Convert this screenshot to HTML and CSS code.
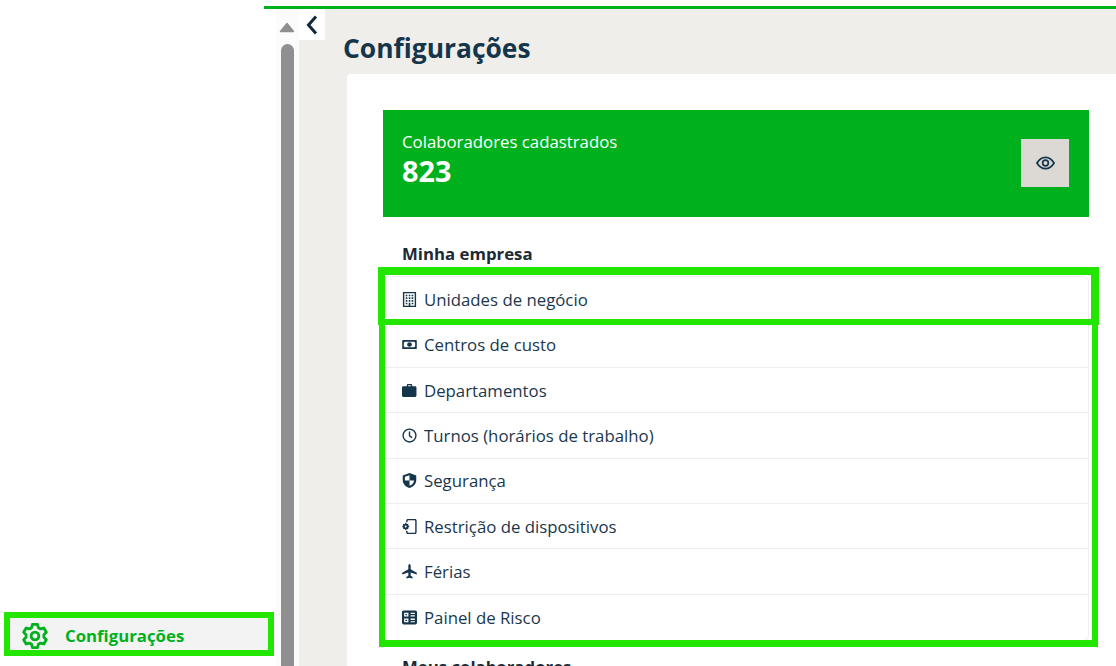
FILE: index.html
```html
<!DOCTYPE html>
<html lang="pt-BR">
<head>
<meta charset="utf-8">
<title>Configurações</title>
<link rel="stylesheet" href="styles.css">
</head>
<body>
<div class="shell">
  <aside class="sidebar">
    <a class="side-item">
      <svg class="gear" viewBox="0 0 24 24"><path d="M8.890 4.310 9.710 1.240H14.290L15.110 4.310 17.100 5.460 20.170 4.640 22.460 8.600 20.220 10.850V13.150L22.460 15.400 20.170 19.360 17.100 18.540 15.110 19.690 14.290 22.760H9.710L8.890 19.690 6.900 18.540 3.830 19.360 1.540 15.400 3.780 13.150V10.850L1.540 8.600 3.830 4.640 6.900 5.460Z"/><circle cx="12" cy="12" r="3.600"/></svg>
      <span>Configurações</span>
    </a>
  </aside>
  <div class="content">
    <div class="scroll">
      <svg class="scroll-up" viewBox="0 0 16 11"><path d="M8 1.500 14.500 9.500H1.500Z"/></svg>
      <div class="scroll-thumb"></div>
    </div>
    <main class="main">
      <button class="collapse" type="button" aria-label="Recolher">
        <svg viewBox="0 0 12 20"><path d="M10 1.500 2.500 10 10 18.500"/></svg>
      </button>
      <h1 class="title">Configurações</h1>
      <section class="card">
        <div class="banner">
          <div class="banner-text">
            <div class="banner-label">Colaboradores cadastrados</div>
            <div class="banner-value">823</div>
          </div>
          <button class="eye-btn" type="button" aria-label="Mostrar">
            <svg viewBox="0 0 20 14"><path d="M1 7C3.500 2.800 6.500 1 10 1s6.500 1.800 9 6c-2.500 4.200-5.500 6-9 6S3.500 11.200 1 7Z"/><circle cx="10" cy="7" r="3"/></svg>
          </button>
        </div>
        <h2 class="section">Minha empresa</h2>
        <div class="list-wrap">
          <ul class="list">
            <li class="row">
              <svg class="icon" viewBox="0 0 14 14"><path class="line" d="M1.500.500h11v13h-11z"/><path class="dots" d="M3.500 2.500h1.500v1.500H3.500zM6.300 2.500h1.500v1.500H6.300zM9 2.500h1.500v1.500H9zM3.500 5h1.500v1.500H3.500zM6.300 5h1.500v1.500H6.300zM9 5h1.500v1.500H9zM3.500 7.500h1.500v1.500H3.500zM6.300 7.500h1.500v1.500H6.300zM9 7.500h1.500v1.500H9zM3.500 10h1.500v1.500H3.500zM6.300 10h1.500v3H6.300zM9 10h1.500v1.500H9z"/></svg>
              <span>Unidades de negócio</span>
            </li>
            <li class="row">
              <svg class="icon" viewBox="0 0 14 14"><path class="fill" fill-rule="evenodd" d="M1 2.800h12a.8.800 0 0 1 .8.800v6.800a.8.800 0 0 1-.8.800H1a.8.800 0 0 1-.8-.8V3.600A.8.800 0 0 1 1 2.800Zm1.500 1.700-.8.800v3.400l.8.800h9l.8-.8V5.300l-.8-.8Z"/><circle class="fill" cx="7" cy="7" r="2.200"/></svg>
              <span>Centros de custo</span>
            </li>
            <li class="row">
              <svg class="icon" viewBox="0 0 14 14"><path class="fill" d="M4.500 3V1.800c0-.5.400-.8.800-.8h3.400c.4 0 .8.300.8.800V3h2.700c.7 0 1.300.6 1.300 1.300v7.400c0 .7-.6 1.300-1.300 1.300H1.300C.6 13 0 12.400 0 11.700V4.300C0 3.600.6 3 1.300 3Zm1.200 0h2.600V2.200H5.700Z"/></svg>
              <span>Departamentos</span>
            </li>
            <li class="row">
              <svg class="icon" viewBox="0 0 14 14"><circle class="line" cx="7" cy="7" r="6"/><path class="line" d="M7 3.300V7.300l2.500 1.700"/></svg>
              <span>Turnos (horários de trabalho)</span>
            </li>
            <li class="row">
              <svg class="icon" viewBox="0 0 14 14"><path class="fill" fill-rule="evenodd" d="M7 0 13.300 2.300V6.500C13.300 10.300 10.700 12.800 7 14 3.300 12.800.7 10.300.7 6.500V2.300ZM7 2 2.700 3.500V7H7V2ZM7 7v5c2.500-1 4-2.800 4.300-5Z"/></svg>
              <span>Segurança</span>
            </li>
            <li class="row">
              <svg class="icon" viewBox="0 0 14 14"><path class="line" d="M4.500 3V1.800c0-.7.500-1.300 1.200-1.300h6.100c.7 0 1.200.6 1.200 1.300v10.400c0 .7-.5 1.300-1.200 1.300H5.700c-.7 0-1.200-.6-1.200-1.300V11"/><circle class="line thick" cx="3.500" cy="7" r="1.700"/><path class="line" d="M3.500 3.800v1.200M3.500 9v1.200M.3 7H1.500M5.500 7h1.200M1.300 4.800l.8.800M4.900 8.400l.8.800M1.300 9.200l.8-.8M4.900 5.600l.8-.8"/></svg>
              <span>Restrição de dispositivos</span>
            </li>
            <li class="row">
              <svg class="icon" viewBox="0 0 14 14"><path class="fill" d="M7 0c.7 0 1.100 1 1.100 2v3l5.700 3.200v1.500L8.100 7.900v3l1.800 1.300v1.400L7 12.800l-2.900.8v-1.400L5.900 10.900v-3L.2 9.700V8.200L5.900 5V2C5.900 1 6.300 0 7 0Z"/></svg>
              <span>Férias</span>
            </li>
            <li class="row">
              <svg class="icon" viewBox="0 0 14 14"><path class="fill" fill-rule="evenodd" d="M1.500.500h11c.8 0 1.500.7 1.500 1.500v10c0 .8-.7 1.500-1.500 1.500h-11C.7 13.500 0 12.800 0 12V2C0 1.200.7.500 1.500.500ZM2 2.500v3.500h4V2.500Zm0 5.500v3.500h4V8Zm6-5.500v1.300h4V2.500Zm0 2.500v1h4V5ZM8 8v1.300h4V8Zm0 2.500v1h4v-1Z"/><path class="hole" d="M3.200 3.700h1.600v1.100H3.200zM3.200 9.200h1.600v1.100H3.200z"/></svg>
              <span>Painel de Risco</span>
            </li>
          </ul>
          <div class="frame frame-top"></div>
          <div class="frame frame-rest"></div>
        </div>
        <h2 class="section section-next">Meus colaboradores</h2>
      </section>
    </main>
  </div>
</div>
</body>
</html>
```
FILE: styles.css
```css
* { box-sizing: border-box; }
html, body { margin: 0; height: 100%; overflow: hidden; background: #fff; }
body { font-family: "Open Sans", sans-serif; color: #1a374d; }

.shell { display: flex; height: 666px; }

.sidebar { width: 264px; flex: none; display: flex; flex-direction: column; justify-content: flex-end; position: relative; z-index: 2; }
.side-item { display: flex; align-items: center; width: 270px; height: 44px; margin: 0 0 10px 4px; padding: 3px 0 0 12px; gap: 17px; background: #f3f3f3; border: 6px solid #22e600; color: #00b11d; font-weight: 700; font-size: 16.800px; }
.gear { width: 26px; height: 26px; flex: none; fill: none; stroke: #00b11d; stroke-width: 2.600; stroke-linejoin: round; }

.content { flex: 1; min-width: 0; display: flex; margin-top: 6px; border-top: 3px solid #00b11d; }

.scroll { width: 35px; flex: none; display: flex; flex-direction: column; align-items: flex-end; padding: 13px 0 0 0; background: linear-gradient(to right, #fff 12px, #fbfbfb 12px); }
.scroll-up { width: 16px; height: 11px; margin-right: 4px; fill: #8f8f8f; stroke: #8f8f8f; stroke-width: 1.500; stroke-linejoin: round; }
.scroll-thumb { width: 13px; flex: 1; margin: 11px 5px 0 0; background: #8f8f8f; border-radius: 7px 7px 0 0; }

.main { flex: 1; min-width: 0; position: relative; background: #efeeea; padding-left: 48px; }
.collapse { position: absolute; left: 0; top: 0; width: 26px; height: 31px; border: 0; padding: 0; background: #fff; display: flex; align-items: center; justify-content: center; }
.collapse svg { width: 12px; height: 20px; fill: none; stroke: #10283b; stroke-width: 3; }

.title { margin: 0 0 0 -4px; height: 65px; padding-top: 21px; font-size: 26.400px; line-height: 36px; font-weight: 700; color: #15354a; }

.card { background: #fff; border-radius: 4px 0 0 0; padding: 36px 27px 0 36px; height: 600px; }

.banner { display: flex; align-items: center; justify-content: space-between; height: 107px; padding: 0 20px 0 19px; background: #00b11d; color: #fff; }
.banner-text { margin-bottom: 8px; }
.banner-label { font-size: 16.800px; line-height: 23px; }
.banner-value { font-size: 28.800px; font-weight: 700; line-height: 36px; }
.eye-btn { width: 48px; height: 48px; margin-bottom: 2px; border: 0; padding: 0; background: #dcd8d3; display: flex; align-items: center; justify-content: center; }
.eye-btn svg { width: 19px; height: 14px; fill: none; stroke: #15354a; stroke-width: 1.800; }

.section { margin: 26px 0 11px 19px; font-size: 16.800px; line-height: 22px; font-weight: 700; color: #1d2a33; }
.section-next { margin-top: 15px; }

.list-wrap { position: relative; }
.list { list-style: none; margin: 0; padding: 0; border: 1px solid #eeeeee; border-radius: 6px; }
.row { display: flex; align-items: center; gap: 7.500px; height: 45.400px; padding: 0.400px 0 0 17.500px; font-size: 16.800px; color: #1a374d; border-bottom: 1px solid #eeeeee; }
.row:last-child { border-bottom: 0; }
.icon { width: 15px; height: 15px; flex: none; }
.icon .fill, .icon .dots { fill: #15354a; }
.icon .line { fill: none; stroke: #15354a; stroke-width: 1.300; }
.icon .line.thick { stroke-width: 1.600; fill: #fff; }
.icon .hole { fill: #15354a; }

.frame { position: absolute; border-style: solid; border-color: #22e600; pointer-events: none; }
.frame-top { left: -5px; top: -9px; width: 721px; height: 58px; border-width: 8px 8px 6px 7px; }
.frame-rest { left: -4px; top: 49px; width: 719px; height: 322px; border-width: 0 6px 7px 6px; }
```
